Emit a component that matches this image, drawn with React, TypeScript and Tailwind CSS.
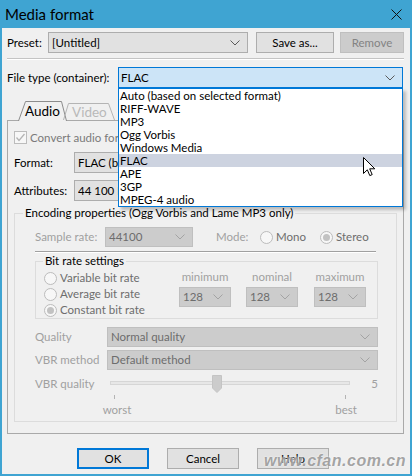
import React from "react";

const ITEMS = [
  "Auto (based on selected format)",
  "RIFF-WAVE",
  "MP3",
  "Ogg Vorbis",
  "Windows Media",
  "FLAC",
  "APE",
  "3GP",
  "MPEG-4 audio",
];

function Chevron({ color = "#5a5a5a" }: { color?: string }) {
  return (
    <svg width="10" height="6" viewBox="0 0 10 6" className="shrink-0">
      <path d="M0.5 0.5 L5 5 L9.5 0.5" fill="none" stroke={color} strokeWidth="1" />
    </svg>
  );
}

function Combo({
  text,
  className = "",
  disabled,
}: {
  text: string;
  className?: string;
  disabled?: boolean;
}) {
  return (
    <div
      className={`flex items-center shrink-0 border pl-[3px] pr-[7px] ${
        disabled ? "bg-[#cccccc] border-[#bfbfbf] text-[#6d6d6d]" : "bg-[#e1e1e1] border-[#adadad]"
      } ${className}`}
    >
      <span className="flex-1 truncate">{text}</span>
      <Chevron color={disabled ? "#a3a3a3" : "#5a5a5a"} />
    </div>
  );
}

function Btn({
  children,
  className = "",
  disabled,
  focused,
}: {
  children: React.ReactNode;
  className?: string;
  disabled?: boolean;
  focused?: boolean;
}) {
  return (
    <div
      className={`h-[21px] shrink-0 flex items-center justify-center ${
        disabled
          ? "bg-[#cccccc] border border-[#bfbfbf] text-[#838383]"
          : focused
          ? "bg-[#e1e1e1] border-2 border-[#0078d7]"
          : "bg-[#e1e1e1] border border-[#adadad]"
      } ${className}`}
    >
      {children}
    </div>
  );
}

function Radio({ label, checked }: { label: string; checked?: boolean }) {
  return (
    <div className="flex items-center gap-[3px] whitespace-nowrap">
      <span className="w-[13px] h-[13px] rounded-full border border-[#bcbcbc] bg-[#f7f7f7] flex items-center justify-center shrink-0">
        {checked && <span className="w-[7px] h-[7px] rounded-full bg-[#c2c2c2]" />}
      </span>
      <span className="text-[#6d6d6d]">{label}</span>
    </div>
  );
}

export default function App() {
  return (
    <div className="w-[412px] h-[476px] bg-[#3fa4d2] flex flex-col overflow-hidden text-[11.5px] leading-[16px] text-black whitespace-nowrap font-['Lato','Noto_Sans_CJK_SC',sans-serif]">
      {/* title bar */}
      <div className="h-[28px] shrink-0 flex items-center pl-[5px] pr-[10px]">
        <span className="flex-1 text-[15px]">Media format</span>
        <svg width="11" height="11" viewBox="0 0 11 11">
          <path d="M0.5 0.5 L10.5 10.5 M10.5 0.5 L0.5 10.5" stroke="#111" strokeWidth="1" />
        </svg>
      </div>

      <div className="relative flex-1 mx-[2px] mb-[2px] bg-[#f0f0f0] pl-[5px] flex flex-col">
        {/* preset */}
        <div className="mt-[4px] flex items-center h-[21px]">
          <span className="w-[41px] shrink-0">Preset:</span>
          <Combo text="[Untitled]" className="w-[200px] h-[21px]" />
          <Btn className="ml-[8px] w-[78px]">Save as...</Btn>
          <Btn disabled className="ml-[6px] w-[64px]">
            Remove
          </Btn>
        </div>
        <div className="mt-[5px] w-[397px] border-t border-t-[#c4c4c4] border-b border-b-white" />

        {/* file type */}
        <div className="mt-[7px] flex items-center h-[21px]">
          <span className="w-[111px] shrink-0">File type (container):</span>
          <div className="w-[285px] h-[21px] shrink-0 bg-[#cce4f7] border border-[#0078d7] flex items-center pl-[2px] pr-[7px]">
            <span className="flex-1">FLAC</span>
            <Chevron />
          </div>
        </div>

        {/* tabs */}
        <div className="mt-[12px] h-[20px] flex pl-[11px] relative z-10">
          <div className="relative w-[49px] h-[20px]">
            <svg width="49" height="21" viewBox="0 0 49 21" className="absolute left-0 top-0">
              <path d="M0.5 21 L7.5 1.5 H43.5 L48.5 21" fill="#f0f0f0" stroke="#8c8c8c" strokeWidth="1" />
            </svg>
            <span className="absolute left-[7px] top-[2px] text-[13.5px] leading-[18px]">Audio</span>
          </div>
          <div className="relative w-[52px] h-[20px] -ml-[4px]">
            <svg width="52" height="20" viewBox="0 0 52 20" className="absolute left-0 top-0">
              <path d="M0.5 20 L5.5 3.5 H45.5 L51.5 20" fill="none" stroke="#b4b4b4" strokeWidth="1" />
            </svg>
            <span className="absolute left-[9px] top-[3px] text-[13.5px] leading-[18px] text-[#b9b9b9]">Video</span>
          </div>
        </div>

        {/* tab panel */}
        <div className="w-[397px] h-[314px] border border-[#a9a9a9] px-[6px] flex flex-col">
          <div className="mt-[10px] flex items-center h-[13px]">
            <span className="w-[13px] h-[13px] shrink-0 border border-[#bcbcbc] bg-[#f7f7f7] flex items-center justify-center">
              <svg width="11" height="11" viewBox="0 0 11 11">
                <path d="M1.5 5.5 L4 8.5 L9.5 2" fill="none" stroke="#b4b4b4" strokeWidth="1.3" />
              </svg>
            </span>
            <span className="ml-[3px] text-[#7a7a7a]">Convert audio format</span>
          </div>
          <div className="mt-[8px] flex items-center h-[21px]">
            <span className="w-[60px] shrink-0">Format:</span>
            <Combo text="FLAC (based on format)" className="flex-1 h-[21px]" />
          </div>
          <div className="mt-[7px] flex items-center h-[21px]">
            <span className="w-[60px] shrink-0">Attributes:</span>
            <Combo text="44 100 Hz, Stereo" className="flex-1 h-[21px]" />
          </div>

          {/* encoding group */}
          <fieldset className="mt-[4px] w-[383px] border border-[#dcdcdc] pb-[4px]">
            <legend className="ml-[8px] px-[2px] leading-[16px]">
              Encoding properties (Ogg Vorbis and Lame MP3 only)
            </legend>
            <div className="pl-[20px] pr-[18px] flex flex-col">
              <div className="mt-[6px] flex items-center h-[20px]">
                <span className="w-[70px] shrink-0 text-[#a0a0a0]">Sample rate:</span>
                <Combo disabled text="44100" className="w-[88px] h-[20px]" />
                <span className="ml-[23px] w-[44px] shrink-0 text-[#a0a0a0]">Mode:</span>
                <div className="w-[60px] shrink-0">
                  <Radio label="Mono" />
                </div>
                <Radio label="Stereo" checked />
              </div>
              <div className="mt-[4px] w-[341px] border-t border-t-[#a0a0a0] border-b border-b-white" />

              {/* bit rate group */}
              <fieldset className="w-[343px] border border-[#dcdcdc]">
                <legend className="ml-[7px] px-[2px] leading-[16px]">Bit rate settings</legend>
                <div className="flex">
                  <div className="w-[143px] shrink-0 pl-[8px] mt-[1px] flex flex-col">
                    <div className="h-[16px] flex items-center">
                      <Radio label="Variable bit rate" />
                    </div>
                    <div className="h-[16px] flex items-center">
                      <Radio label="Average bit rate" />
                    </div>
                    <div className="h-[16px] flex items-center">
                      <Radio label="Constant bit rate" checked />
                    </div>
                  </div>
                  {[
                    { l: "minimum", m: "ml-[0px]" },
                    { l: "nominal", m: "ml-[15px]" },
                    { l: "maximum", m: "ml-[16px]" },
                  ].map((c) => (
                    <div key={c.l} className={`w-[52px] shrink-0 flex flex-col items-center ${c.m}`}>
                      <span className="mt-[1px] leading-[14px] text-[#a0a0a0]">{c.l}</span>
                      <Combo disabled text="128" className="mt-[3px] w-[52px] h-[20px]" />
                    </div>
                  ))}
                </div>
              </fieldset>

              <div className="mt-[8px] flex items-center h-[20px]">
                <span className="w-[72px] shrink-0 text-[#a0a0a0]">Quality</span>
                <Combo disabled text="Normal quality" className="flex-1 h-[20px]" />
              </div>
              <div className="mt-[3px] flex items-center h-[20px]">
                <span className="w-[72px] shrink-0 text-[#a0a0a0]">VBR method</span>
                <Combo disabled text="Default method" className="flex-1 h-[20px]" />
              </div>
              <div className="mt-[5px] flex items-start h-[25px]">
                <span className="w-[75px] shrink-0 leading-[18px] text-[#a0a0a0]">VBR quality</span>
                <svg width="240" height="25" viewBox="0 0 240 25" className="shrink-0">
                  <rect x="0.5" y="6.5" width="239" height="3" fill="#e7e7e7" stroke="#d6d6d6" />
                  <path d="M102.5 0.5 H111.5 V13 L107 17.5 L102.5 13 Z" fill="#cccccc" stroke="#c4c4c4" />
                  <path d="M4.5 20 V24 M235.5 20 V24" stroke="#b4b4b4" />
                </svg>
                <span className="flex-1 text-right leading-[18px] text-[#a0a0a0]">5</span>
              </div>
              <div className="mt-[3px] flex leading-[14px] text-[#a0a0a0]">
                <span className="ml-[62px] w-[40px] text-center">worst</span>
                <span className="ml-[189px] w-[40px] text-center">best</span>
              </div>
            </div>
          </fieldset>
        </div>

        {/* buttons */}
        <div className="mt-[14px] ml-[70px] flex gap-[18px]">
          <Btn focused className="w-[72px]">
            OK
          </Btn>
          <Btn className="w-[72px]">Cancel</Btn>
          <Btn className="w-[72px]">Help</Btn>
        </div>

        {/* dropdown list */}
        <div className="absolute left-[116px] top-[60px] w-[285px] h-[119px] bg-white border border-[#0078d7] shadow-[3px_3px_3px_rgba(0,0,0,0.22)] flex flex-col">
          {ITEMS.map((it) => (
            <div
              key={it}
              className={`h-[13px] leading-[13px] pl-[1px] ${it === "FLAC" ? "bg-[#cdd3e0]" : ""}`}
            >
              {it}
            </div>
          ))}
        </div>

        {/* mouse cursor */}
        <svg width="13" height="21" viewBox="0 0 13 21" className="absolute left-[361px] top-[129px]">
          <path
            d="M0.5 0.5 V16.5 L4.3 12.8 L6.8 18.6 L9.2 17.6 L6.7 11.8 H11.8 Z"
            fill="white"
            stroke="black"
            strokeWidth="1"
          />
        </svg>

        {/* watermark */}
        <span className="absolute right-[4px] bottom-[5px] text-[16px] leading-[16px] italic font-bold tracking-[0.5px] text-[#8c8c8c]/80 [text-shadow:0_0_2px_white] font-['Liberation_Sans',sans-serif]">
          www.cfan.com.cn
        </span>
      </div>
    </div>
  );
}
